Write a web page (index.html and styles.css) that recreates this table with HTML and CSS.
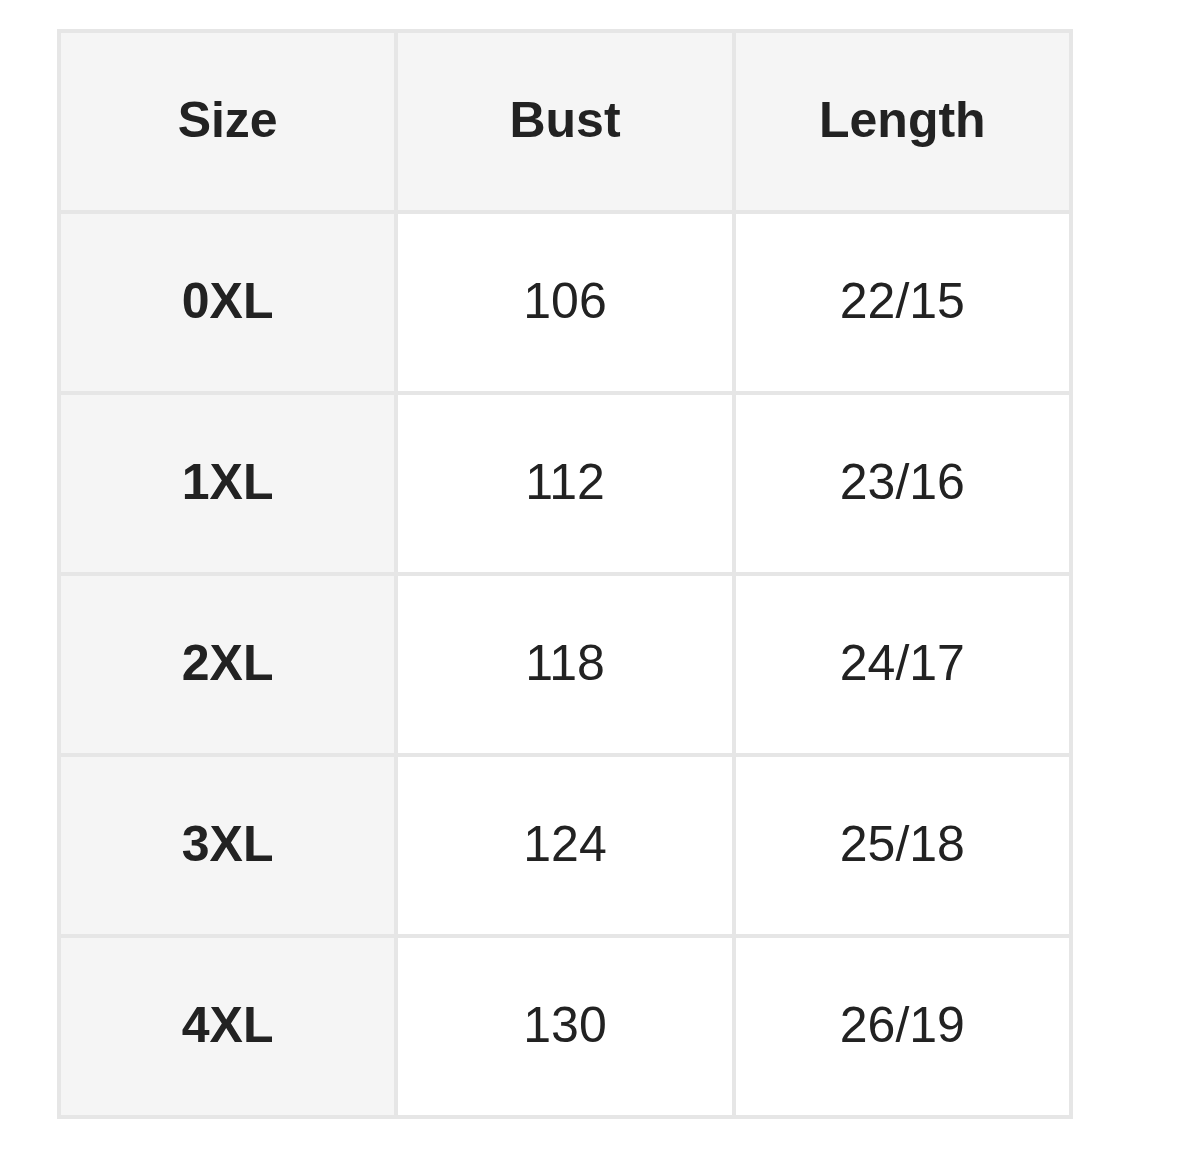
FILE: index.html
```html
<!DOCTYPE html>
<html>
<head>
<meta charset="utf-8">
<link rel="stylesheet" href="styles.css">
</head>
<body>
<table class="size-table">
  <thead>
    <tr><th>Size</th><th>Bust</th><th>Length</th></tr>
  </thead>
  <tbody>
    <tr><th>0XL</th><td>106</td><td>22/15</td></tr>
    <tr><th>1XL</th><td>112</td><td>23/16</td></tr>
    <tr><th>2XL</th><td>118</td><td>24/17</td></tr>
    <tr><th>3XL</th><td>124</td><td>25/18</td></tr>
    <tr><th>4XL</th><td>130</td><td>26/19</td></tr>
  </tbody>
</table>
</body>
</html>
```
FILE: styles.css
```css
html, body {
  margin: 0;
  background: #ffffff;
}
body {
  padding: 29px 0 0 57px;
  font-family: "Liberation Sans", Arial, sans-serif;
  color: #222222;
}
.size-table {
  width: 1016px;
  border-collapse: collapse;
  table-layout: fixed;
  border: 4px solid #e6e6e6;
}
.size-table th,
.size-table td {
  border: 4px solid #e6e6e6;
  height: 181px;
  padding: 0 0 3px 0;
  box-sizing: border-box;
  text-align: center;
  vertical-align: middle;
  font-size: 50px;
  line-height: 1;
}
.size-table th {
  font-weight: bold;
  background: #f5f5f5;
}
.size-table td {
  font-weight: normal;
  background: #ffffff;
}
```
